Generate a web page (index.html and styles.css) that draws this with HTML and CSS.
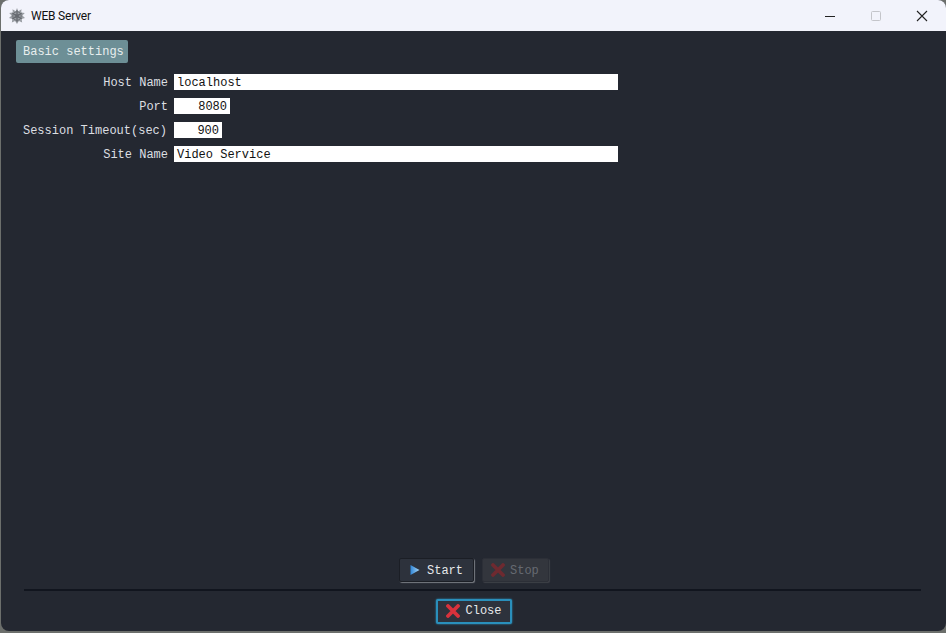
FILE: index.html
```html
<!DOCTYPE html>
<html lang="en">
<head>
<meta charset="utf-8">
<title>WEB Server</title>
<link rel="stylesheet" href="styles.css">
</head>
<body>
<div class="window">
  <header class="titlebar">
    <svg class="app-icon" viewBox="0 0 16 16" width="16" height="16" aria-hidden="true">
      <path d="M8 0L9.3 3.2 12.5 1.2 12.2 4.6 15.8 5 13.4 7.6 16 10 12.6 10.9 13.2 14.4 9.9 13 8 16 6.1 13 2.8 14.4 3.4 10.9 0 10 2.6 7.6 0.2 5 3.8 4.6 3.5 1.2 6.7 3.2z" fill="#9a9ea4"/>
      <g stroke="#5a5e64" stroke-width="0.8" fill="none">
        <path d="M8 2v12M3 5l10 6M13 5L3 11"/>
        <circle cx="8" cy="8" r="2"/>
        <circle cx="8" cy="8" r="4.2"/>
      </g>
    </svg>
    <span class="title">WEB Server</span>
    <div class="controls">
      <span class="ctl"><svg viewBox="0 0 12 12" width="12" height="12"><path d="M1 6.5h10" stroke="#222" stroke-width="1"/></svg></span>
      <span class="ctl"><svg viewBox="0 0 12 12" width="12" height="12"><rect x="1.5" y="1.5" width="9" height="9" rx="1" fill="none" stroke="#c4c5ca"/></svg></span>
      <span class="ctl"><svg viewBox="0 0 12 12" width="12" height="12"><path d="M1 1l10 10M11 1L1 11" stroke="#222" stroke-width="1.1"/></svg></span>
    </div>
  </header>
  <main class="content">
    <div class="tab">Basic settings</div>
    <div class="form">
      <label class="label">Host Name</label><div class="field wide">localhost</div>
      <label class="label">Port</label><div class="field port num">8080</div>
      <label class="label timeout">Session Timeout(sec)</label><div class="field timeoutf num">900</div>
      <label class="label">Site Name</label><div class="field wide">Video Service</div>
    </div>
    <div class="spacer"></div>
    <div class="actions">
      <button class="btn start" type="button">
        <svg viewBox="0 0 10 10" width="10" height="10"><defs><linearGradient id="pl" x1="0" x2="1"><stop offset="0" stop-color="#2f86d8"/><stop offset="1" stop-color="#a8d6f5"/></linearGradient></defs><path d="M0.5 0L9.5 5L0.5 10z" fill="url(#pl)"/></svg>
        <span class="btn-text">Start</span>
      </button>
      <button class="btn stop" type="button">
        <svg viewBox="0 0 14 14" width="14" height="14"><path d="M2 2l10 10M12 2L2 12" stroke="#6e2a30" stroke-width="3.8" stroke-linecap="round"/></svg>
        <span class="btn-text">Stop</span>
      </button>
    </div>
    <div class="rule"></div>
    <div class="bottom">
      <button class="btn close" type="button">
        <svg viewBox="0 0 14 14" width="14" height="14"><path d="M2 2l10 10M12 2L2 12" stroke="#d8323c" stroke-width="3.8" stroke-linecap="round"/></svg>
        <span>Close</span>
      </button>
    </div>
  </main>
</div>
</body>
</html>
```
FILE: styles.css
```css
* { box-sizing: border-box; }
html, body { margin: 0; height: 100%; }
body { width: 946px; height: 633px; background: #6c6f6c; overflow: hidden; font-family: "Liberation Mono", monospace; }
.window { width: 945px; height: 631px; margin-left: 1px; display: flex; flex-direction: column; background: #242831; border-radius: 8px; overflow: hidden; }
.titlebar { height: 31px; flex: none; background: #f2f3fb; display: flex; align-items: center; padding-left: 8px; }
.app-icon { flex: none; }
.title { margin-left: 6px; font: 12px Roboto, sans-serif; letter-spacing: -0.2px; color: #111; }
.controls { margin-left: auto; display: flex; margin-right: 1px; }
.ctl { width: 46px; height: 31px; display: flex; align-items: center; justify-content: center; }
.content { flex: 1; display: flex; flex-direction: column; padding: 9px 0 0 15px; min-height: 0; }
.tab { width: 112px; height: 23px; background: #6d8f96; color: #e8eeee; border-radius: 2px; font-size: 12px; line-height: 23px; padding: 1px 0 0 7px; white-space: nowrap; }
.form { display: grid; grid-template-columns: 158px auto; row-gap: 8px; margin-top: 11px; justify-items: start; }
.label { justify-self: end; height: 16px; color: #dcdfe2; font-size: 12px; line-height: 16px; padding: 1px 6px 0 0; white-space: nowrap; }
.label.timeout { padding-right: 7px; }
.field { height: 16px; background: #fff; color: #111; font-size: 12px; line-height: 16px; padding: 1px 3px 0; }
.wide { width: 444px; }
.port { width: 56px; }
.timeoutf { width: 48px; }
.num { text-align: right; }
.spacer { flex: 1; }
.actions { display: flex; justify-content: center; gap: 8px; margin-right: 14px; }
.btn { height: 24px; display: flex; align-items: center; justify-content: flex-start; border: 1px solid #1b1e25; border-radius: 2px; background: #2d323c; color: #e6e8ea; font-family: "Liberation Mono", monospace; font-size: 12px; padding: 0; }
.btn-text { padding-top: 2px; }
.start { width: 75px; gap: 7px; padding-left: 10px; box-shadow: 1px 1px 1px #777b82; }
.stop { width: 67px; gap: 5px; padding-left: 8px; background: #33363d; color: #666a71; border-color: #2c2f37; box-shadow: 1px 1px 1px #3e4148; }
.rule { height: 2px; margin: 7px 25px 0 8px; background: #11151e; }
.bottom { height: 40px; display: flex; justify-content: center; align-items: center; margin-right: 15px; }
.close { width: 76px; height: 25px; gap: 6px; padding-left: 8px; border: 2px solid #2a8fbb; box-shadow: 0 0 2px #2f9bc8; }
```
